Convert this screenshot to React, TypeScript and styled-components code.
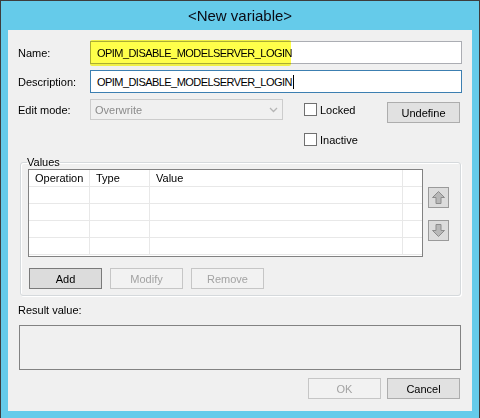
import React from 'react';
import styled, { createGlobalStyle } from 'styled-components';

const Global = createGlobalStyle`
  html, body { margin: 0; padding: 0; background: #ffffff; }
  body { font-family: "Liberation Sans", Arial, sans-serif; font-size: 11px; color: #000; }
  * { box-sizing: border-box; }
`;

const Window = styled.div`
  width: 480px;
  height: 418px;
  background: #65cbea;
  border: 1px solid #3d3d3d;
  border-bottom: none;
  padding: 0 7px 7px 7px;
  display: flex;
  flex-direction: column;
`;

const TitleBar = styled.div`
  height: 29px;
  display: flex;
  align-items: center;
  justify-content: center;
  font-size: 15px;
  color: #0a0a14;
`;

const Client = styled.div`
  flex: 1;
  background: #f0f0f0;
  padding: 11px 10px 0 10px;
  display: flex;
  flex-direction: column;
`;

const FieldRow = styled.div<{ $top?: number }>`
  display: flex;
  align-items: center;
  height: 23px;
  margin-top: ${(p) => p.$top ?? 0}px;
`;

const Label = styled.div`
  width: 72px;
  flex: none;
  white-space: nowrap;
`;

const TextBox = styled.div<{ $focused?: boolean }>`
  position: relative;
  flex: 1;
  height: 23px;
  background: #ffffff;
  border: 1px solid ${(p) => (p.$focused ? '#3c7fb1' : '#abadb3')};
  padding: 0 6px;
  display: flex;
  align-items: center;
  letter-spacing: -0.55px;
  white-space: nowrap;
`;

const Highlight = styled.span`
  position: absolute;
  left: -1px;
  top: -2px;
  width: 201px;
  height: 26px;
  background: #ffff4a;
  mix-blend-mode: multiply;
  border-radius: 2px;
  pointer-events: none;
`;

const Caret = styled.span`
  display: inline-block;
  width: 1px;
  height: 14px;
  background: #000;
  margin-left: 1px;
`;

const EditGrid = styled.div`
  margin-top: 6px;
  display: grid;
  grid-template-columns: 72px 193px 21px 83px 73px;
  grid-template-rows: 21px 21px;
  row-gap: 9px;
  align-items: center;
`;

const Combo = styled.div`
  height: 21px;
  border: 1px solid #cccccc;
  background: #f0f0f0;
  color: #8b8b8b;
  padding: 0 4px 0 4px;
  display: flex;
  align-items: center;
  justify-content: space-between;
`;

const CheckWrap = styled.label<{ $row: number }>`
  grid-column: 4;
  grid-row: ${(p) => p.$row};
  display: flex;
  align-items: center;
  gap: 3px;
`;

const CheckBox = styled.span`
  width: 13px;
  height: 13px;
  border: 1px solid #707070;
  background: #ffffff;
`;

const Button = styled.div<{ $variant?: 'normal' | 'default' | 'disabled' }>`
  width: 73px;
  height: 21px;
  display: flex;
  align-items: center;
  justify-content: center;
  border: 1px solid
    ${(p) => (p.$variant === 'default' ? '#7a7a7a' : p.$variant === 'disabled' ? '#c6c6c6' : '#adadad')};
  background: ${(p) =>
    p.$variant === 'disabled' ? '#f2f2f2' : p.$variant === 'default' ? '#dcdcdc' : '#e1e1e1'};
  color: ${(p) => (p.$variant === 'disabled' ? '#a3a3a3' : '#000')};
`;

const UndefineButton = styled(Button)`
  grid-column: 5;
  grid-row: 1;
  align-self: start;
  margin-top: 3px;
`;

const Group = styled.fieldset`
  margin: 6px 1px 0 2px;
  padding: 0 7px 6px 7px;
  border: 1px solid #d5d9dc;
  border-radius: 3px;
  box-shadow: inset 1px 1px 0 #ffffff, 1px 1px 0 #ffffff;
  min-width: 0;
`;

const Legend = styled.legend`
  padding: 0;
  margin-left: -1px;
  line-height: 13px;
`;

const GroupBody = styled.div`
  display: flex;
  gap: 5px;
`;

const ListView = styled.div`
  width: 395px;
  height: 88px;
  border: 1px solid #828282;
  background: #ffffff;
  display: grid;
  grid-template-columns: 61px 60px 253px 1fr;
  grid-template-rows: 17px repeat(4, 17px);
`;

const Cell = styled.div<{ $last?: boolean }>`
  border-right: ${(p) => (p.$last ? 'none' : '1px solid #e8e8e8')};
  border-bottom: 1px solid #e8e8e8;
  padding-left: 6px;
  display: flex;
  align-items: center;
  white-space: nowrap;
`;

const ArrowColumn = styled.div`
  display: flex;
  flex-direction: column;
  gap: 12px;
  padding-top: 18px;
`;

const ArrowButton = styled.div`
  width: 21px;
  height: 21px;
  border: 1px solid #9a9a9a;
  background: #dcdcdc;
  display: flex;
  align-items: center;
  justify-content: center;
`;

const ButtonRow = styled.div<{ $top: number; $end?: boolean }>`
  display: flex;
  gap: ${(p) => (p.$end ? 6 : 8)}px;
  margin-top: ${(p) => p.$top}px;
  justify-content: ${(p) => (p.$end ? 'flex-end' : 'flex-start')};
  padding-left: ${(p) => (p.$end ? 0 : 1)}px;
  padding-right: ${(p) => (p.$end ? 2 : 0)}px;
`;

const ResultLabel = styled.div`
  margin-top: 8px;
  line-height: 13px;
`;

const ResultBox = styled.div`
  margin: 8px 1px 0 1px;
  height: 45px;
  border: 1px solid #828282;
  background: #f0f0f0;
`;

const Arrow = ({ down }: { down?: boolean }) => (
  <svg width="15" height="15" viewBox="0 0 15 15" style={{ transform: down ? 'rotate(180deg)' : undefined }}>
    <polygon
      points="7.5,1.5 13.5,7.5 10,7.5 10,13.5 5,13.5 5,7.5 1.5,7.5"
      fill="#b8b8b8"
      stroke="#8c8c8c"
      strokeWidth="1"
      strokeLinejoin="miter"
    />
  </svg>
);

const Chevron = () => (
  <svg width="9" height="6" viewBox="0 0 9 6">
    <polyline points="1,1 4.5,4.5 8,1" fill="none" stroke="#b5b5b5" strokeWidth="1.3" />
  </svg>
);

const headers = ['Operation', 'Type', 'Value', ''];

export default function App() {
  return (
    <>
      <Global />
      <Window>
        <TitleBar>&lt;New variable&gt;</TitleBar>
        <Client>
          <FieldRow>
            <Label>Name:</Label>
            <TextBox>
              <Highlight />
              OPIM_DISABLE_MODELSERVER_LOGIN
            </TextBox>
          </FieldRow>
          <FieldRow $top={6}>
            <Label>Description:</Label>
            <TextBox $focused>
              OPIM_DISABLE_MODELSERVER_LOGIN
              <Caret />
            </TextBox>
          </FieldRow>
          <EditGrid>
            <Label>Edit mode:</Label>
            <Combo>
              <span>Overwrite</span>
              <Chevron />
            </Combo>
            <CheckWrap $row={1}>
              <CheckBox />
              Locked
            </CheckWrap>
            <UndefineButton>Undefine</UndefineButton>
            <CheckWrap $row={2}>
              <CheckBox />
              Inactive
            </CheckWrap>
          </EditGrid>
          <Group>
            <Legend>Values</Legend>
            <GroupBody>
              <ListView>
                {headers.map((h, i) => (
                  <Cell key={'h' + i} $last={i === 3}>
                    {h}
                  </Cell>
                ))}
                {Array.from({ length: 16 }).map((_, i) => (
                  <Cell key={i} $last={i % 4 === 3} />
                ))}
              </ListView>
              <ArrowColumn>
                <ArrowButton>
                  <Arrow />
                </ArrowButton>
                <ArrowButton>
                  <Arrow down />
                </ArrowButton>
              </ArrowColumn>
            </GroupBody>
            <ButtonRow $top={11}>
              <Button $variant="default">Add</Button>
              <Button $variant="disabled">Modify</Button>
              <Button $variant="disabled">Remove</Button>
            </ButtonRow>
          </Group>
          <ResultLabel>Result value:</ResultLabel>
          <ResultBox />
          <ButtonRow $top={8} $end>
            <Button $variant="disabled">OK</Button>
            <Button>Cancel</Button>
          </ButtonRow>
        </Client>
      </Window>
    </>
  );
}
